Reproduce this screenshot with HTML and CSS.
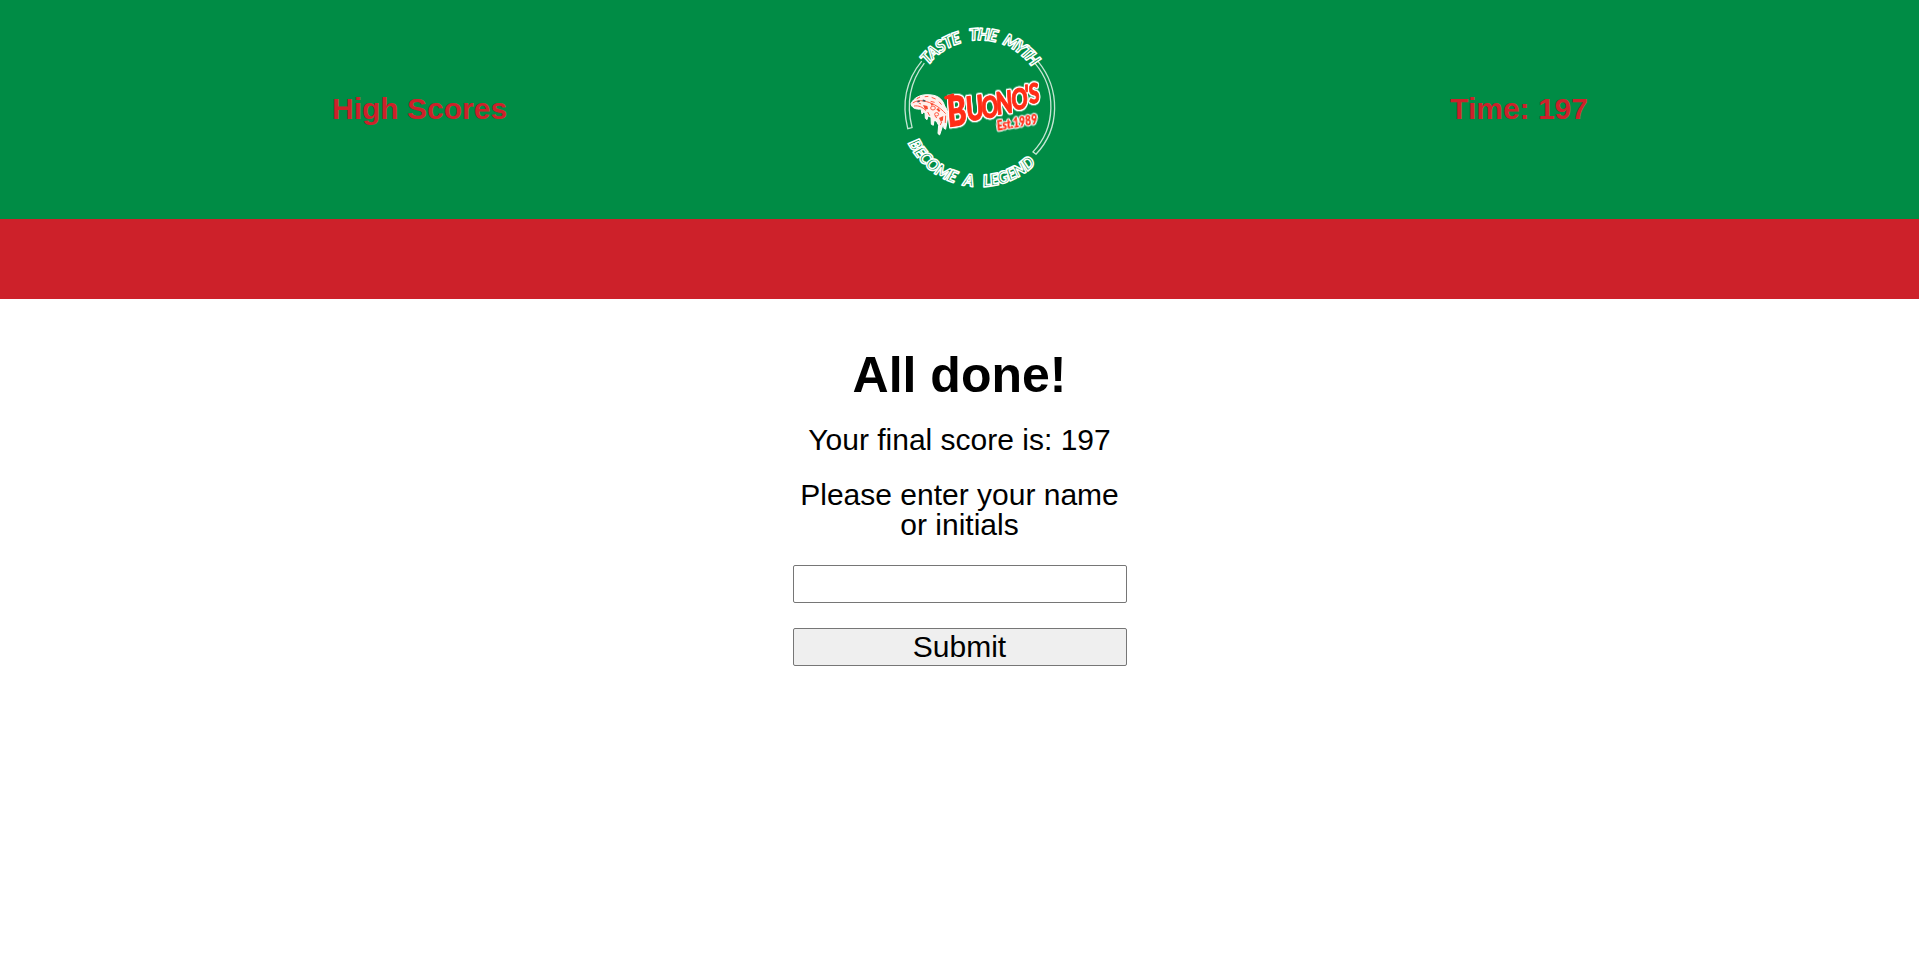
FILE: index.html
```html
<!DOCTYPE html>
<html lang="en">
<head>
<meta charset="utf-8">
<title>Buono's Quiz</title>
<link rel="stylesheet" href="styles.css">
</head>
<body>
<header class="header">
  <a class="header-item">High Scores</a>
  <svg class="logo" viewBox="-159 -45 846 657" role="img" aria-label="Buono's">
    <defs>
      <path id="arc-top" d="M72 270A195 195 0 0 1 462 270"/>
      <path id="arc-bottom" d="M25 275A242 242 0 0 0 509 275"/>
    </defs>
    <g class="ring">
      <path d="M93 138Q22 225 51 341L64 338Q36 228 101 144"/>
      <path d="M433 143C501 222 497 340 428 411L437 418C510 342 512 222 442 137"/>
    </g>
    <g class="motto">
      <text textLength="126"><textPath href="#arc-top" startOffset="127">TASTE</textPath></text>
      <text textLength="82"><textPath href="#arc-top" startOffset="276">THE</textPath></text>
      <text textLength="116"><textPath href="#arc-top" startOffset="375">MYTH</textPath></text>
      <text textLength="190"><textPath href="#arc-bottom" startOffset="114">BECOME</textPath></text>
      <text textLength="30"><textPath href="#arc-bottom" startOffset="328">A</textPath></text>
      <text textLength="178"><textPath href="#arc-bottom" startOffset="391">LEGEND</textPath></text>
    </g>
    <g class="pizza">
      <path class="slice" d="M61 266C68 250 87 238 112 239C138 239 156 250 162 273C172 285 174 300 170 315L165 343L160 340L158 325L152 345L147 360L142 356L144 331L137 318L130 317L128 331L122 328L121 307L112 303L109 314L104 310L103 293L99 291L94 297L91 282C75 284 62 278 61 266Z"/>
      <path class="crust" d="M66 264C85 250 113 260 131 269C147 278 156 286 165 296M70 273C84 271 96 276 105 287M78 251L88 246M102 245L113 244M123 247L135 252M145 260L153 269M120 259L132 262M84 264L91 267M111 291L117 302M132 303L139 309M149 330L153 321M165 302L164 324"/>
      <path class="topping" d="M97 270L110 273L112 282L103 284ZM145 309L158 303L157 316L151 321ZM119 264L129 267L123 273ZM137 283L143 279L149 287L145 291Z"/>
      <ellipse class="pepper" cx="127" cy="279" rx="7" ry="6"/>
      <ellipse class="pepper" cx="138" cy="298" rx="6" ry="5"/>
      <path class="eyes" d="M80 260L87 258M96 256L104 258"/>
    </g>
    <text class="name" transform="scale(.7 1)" rotate="-6"><tspan class="l1" x="247" y="336">B</tspan><tspan class="l2" x="328" y="319">U</tspan><tspan class="l3" x="393" y="311">O</tspan><tspan class="l4" x="456" y="299">N</tspan><tspan class="l5" x="522" y="286">O</tspan><tspan class="l6" x="580" y="268">'</tspan><tspan class="l7" x="597" y="266">S</tspan></text>
    <path class="spur" d="M166 248L186 241"/>
    <text class="since" transform="translate(322 347) rotate(-10)" textLength="123" lengthAdjust="spacingAndGlyphs">Est.1989</text>
  </svg>
  <span class="header-item">Time: 197</span>
</header>
<div class="band"></div>
<main class="result">
  <h1 class="title">All done!</h1>
  <p class="line">Your final score is: 197</p>
  <label class="line" for="initials">Please enter your name or initials</label>
  <input class="field" id="initials" type="text">
  <button class="submit" type="button">Submit</button>
</main>
</body>
</html>
```
FILE: styles.css
```css
* {
  box-sizing: border-box;
  margin: 0;
  padding: 0;
}

body {
  font-family: "Liberation Sans", Arial, sans-serif;
  font-size: 30px;
  line-height: 1;
  color: #000;
  background: #fff;
}

.header {
  display: flex;
  justify-content: space-evenly;
  align-items: center;
  height: 219px;
  padding-left: 1px;
  background: #008c45;
}

.header-item {
  padding-bottom: 2px;
  font-weight: bold;
  color: #cd212a;
}

.logo {
  width: 281px;
  height: 219px;
}

.ring {
  fill: none;
  stroke: #c4e6d3;
  stroke-width: 4;
}

.motto {
  font: italic 900 50px Lato, sans-serif;
  fill: #008c45;
  stroke: #fff;
  stroke-width: 4.5;
  stroke-linejoin: round;
}

.slice {
  fill: #fff0ec;
  stroke: #fff;
  stroke-width: 3;
}

.crust,
.pepper {
  fill: none;
  stroke: #ff5a43;
  stroke-width: 3;
}

.topping {
  fill: #f8492f;
}

.eyes {
  fill: none;
  stroke: #46545c;
  stroke-width: 5;
}

.name,
.since {
  font-family: Lato, sans-serif;
  font-weight: 900;
  fill: #ff2d16;
  stroke: #ff2d16;
  stroke-linejoin: round;
  filter: drop-shadow(4px 0 0 #fff) drop-shadow(-4px 0 0 #fff) drop-shadow(0 4px 0 #fff) drop-shadow(0 -4px 0 #fff);
}

.name {
  stroke-width: 3px;
}

.spur {
  stroke: #ff2d16;
  stroke-width: 11;
  stroke-linecap: round;
}

.l1 { font-size: 124px; }
.l2 { font-size: 101px; }
.l3 { font-size: 89px; }
.l4 { font-size: 93px; }
.l5 { font-size: 86px; }
.l6 { font-size: 80px; }
.l7 { font-size: 82px; }

.since {
  font-size: 38px;
  font-style: italic;
  stroke-width: 1px;
  filter: drop-shadow(2px 0 0 #fff) drop-shadow(-2px 0 0 #fff) drop-shadow(0 2px 0 #fff) drop-shadow(0 -2px 0 #fff);
}

.band {
  height: 80px;
  background: #cd212a;
}

.result {
  display: flex;
  flex-direction: column;
  gap: 25px;
  width: 334px;
  margin: 51px auto 0;
  text-align: center;
}

.title {
  font-size: 50px;
}

.field,
.submit {
  width: 100%;
  height: 38px;
  font: inherit;
  border: 1px solid #767676;
  border-radius: 2px;
}

.field {
  background: #fff;
}

.submit {
  color: #000;
  background: #efefef;
}
```
